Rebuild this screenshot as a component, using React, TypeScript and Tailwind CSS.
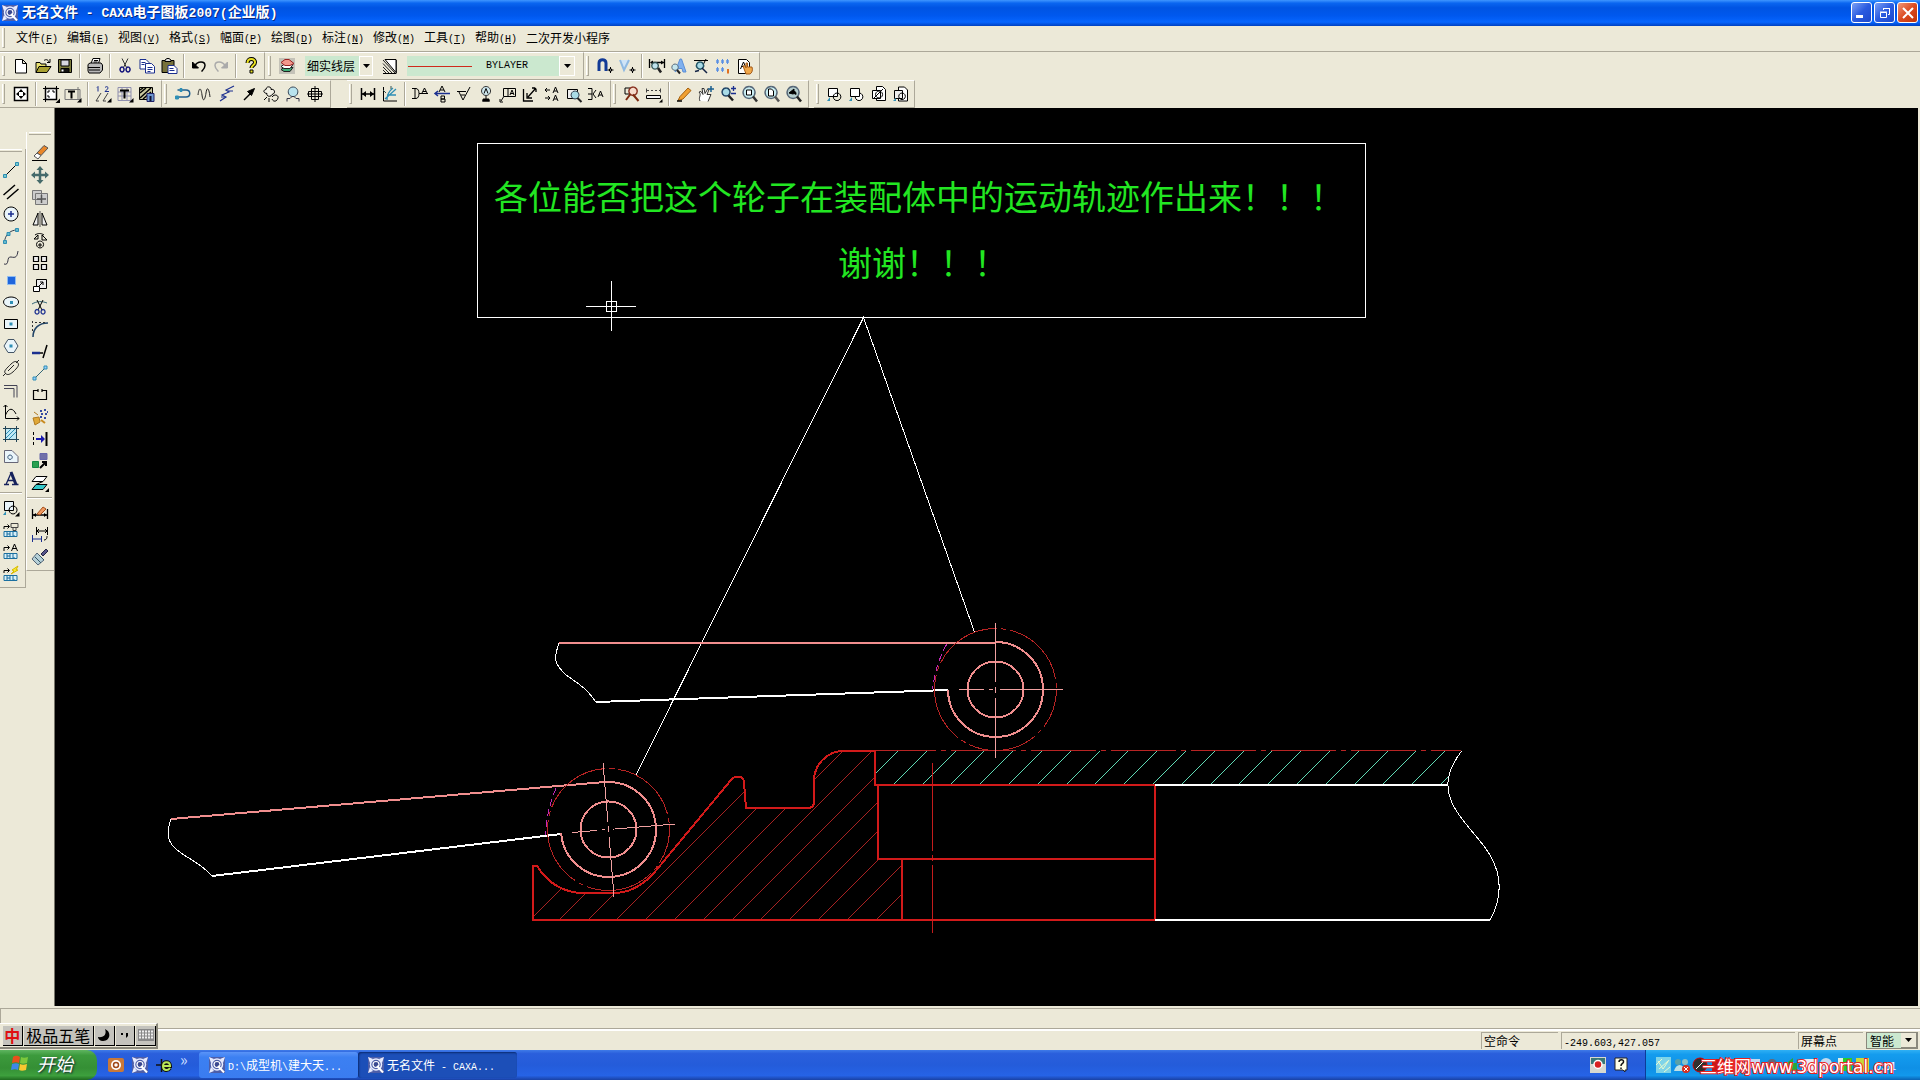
import React from "react";

type Part = [d: string, stroke?: string, fill?: string, width?: number];

const K = "#000";
const B = "#1b2f8f";
const C = "#2f8fb5";
const G = "#777";
const N = "none";

/* Every icon is drawn on an 18 x 18 grid. */
const ICONS: Record<string, Part[]> = {
  new: [["M4 2.500h6.500l4 4v9.500H3.500V2.500zM10.500 2.500v4h4", K, "#fff"]],
  open: [["M2 15.500V5.500h4l1 1.500h5v2.500", K, "#e8e070"], ["M2 15.500l3-6h12l-4 6z", K, "#a8a030"], ["M10 3.500c2-1.500 4-1 5 1.500M16 2v3.500h-3", K]],
  save: [["M2.500 2.500h13v13h-13z", K, "#7d7d3c"], ["M5 3h8v6H5z", K, "#d8d8e0"], ["M5 11.500h8v4H5z", K, "#111"], ["M6.500 12.500v2", "#fff", N, 2]],
  print: [["M5 6.500l2-5h7l-1.500 5", K, "#fff"], ["M2 7.500l2-1.500h11l1.500 2v5l-2.500 3H3l-1-2z", K, "#b9b9b9"], ["M2 10.500h12M3 13h11M8 3.500h4M7.500 5h4", K]],
  cut: [["M6 1.500l4.500 9M12 1.500l-4.500 9", "#333"], ["M6 10a2 2.500 0 1 0 .1 0M12 10a2 2.500 0 1 0 .1 0", "#10107a", N, 1.5]],
  copy: [["M2 2.500h6l3 3v6.500H2z", B, "#fff"], ["M7.500 6.500h6l3 3v6.500H7.500z", B, "#fff"], ["M3.500 5.500h4M3.500 7.500h3M9.500 10.500h5M9.500 12.500h5M9.500 14.500h3", B]],
  paste: [["M2 3.500h12v12H2z", K, "#77713a"], ["M5 4.500V3l2-1.500h2L11 3v1.500z", K, "#ddd"], ["M8 8.500h6l3 3v5H8z", B, "#fff"], ["M9.500 11.500h4M9.500 13.500h5", B]],
  undo: [["M2.500 5v6h6z", K, K], ["M4 9.500C8 3 15 4 15 8.500c0 3-2 4.500-3.500 6", K, N, 1.5]],
  redo: [["M15.500 5v6h-6z", "#aaa", "#aaa"], ["M14 9.500C10 3 3 4 3 8.500c0 3 2 4.500 3.500 6", "#aaa", N, 1.5]],
  help: [["M5.500 6c0-5.500 8-5 7.500-.5 0 2.500-3.500 3-3.500 5.500", K, N, 4], ["M5.500 6c0-5.500 8-5 7.500-.5 0 2.500-3.500 3-3.500 5.500", "#e8e020", N, 2], ["M8 13h3v3H8z", K, "#e8e020"]],
  layers: [["M1 1h16v16H1z", N, "#c4c2b8"], ["M3 12.500l3-2h9l-3 4H6z", "#222", "#3fae76"], ["M3 9.500l3-2h9l-3 4H6z", "#222", "#fff"], ["M3 5.500l4-3 4 0 5 4-4 2H7z", "#922", "#f2988c"]],
  linetype: [["M4 2.500h11v13z", K, "#fff"], ["M2 3l12 13M2 6.500l9 9.500M2 10l6 6M2 13l3 3M15.500 3v13.500", "#222"], ["M2 16.500h13", K]],
  magnet: [["M3 14V6c0-4.500 7-4.500 7 0v8", "#123a96", N, 3], ["M14.500 10v6M11.500 13h6", K], ["M13.500 12h2v2h-2z", K, "#fff"]],
  vsnap: [["M2 3l4 10 5-10", "#8fb9e2", "#cfe4f7", 2], ["M14.500 10v6M11.500 13h6", K], ["M13.500 12h2v2h-2z", K, "#fff"]],
  dimZoom: [["M1.500 2v9M16.500 2v9M3 5.500h13", K, N, 1.300], ["M2 5.500l3-2v4zM16 5.500l-3-2v4z", N, K], ["M7 5.500a3.300 3.300 0 1 0 .1 0", "#355", "#bfe2ec", 1.300], ["M10 11l3 4.500", "#222", N, 2.500]],
  textZoom: [["M5 15L10 2h1.500L16 15h-3l-1-3.500H9z", "#5b8fd8", "#7fb0ee"], ["M5 7a3.200 3.200 0 1 0 .1 0", "#567", "#c4e6ee"], ["M7 13l3 3.500", "#222", N, 2]],
  styleZoom: [["M2 3.500h14M14 2l-4 8", K], ["M8 5a3.600 3.600 0 1 0 .1 0", "#256", "#a9dbe6", 1.500], ["M10 11l5 5M3 14.500l4-1", "#124", N, 1.500]],
  points: [["M2 4.500h3M7 4.500h3M12 4.500h3M2 12.500h3M7 12.500h3", "#7fa8e4", N, 3], ["M3.500 2v5M8.500 2v5M13.500 2v5M3.500 10v5M8.500 10v5", "#5b8fe0"], ["M14 12v4.500", "#e07020", N, 2]],
  pageHand: [["M2.500 2.500h8l3 3v11h-11z", K, "#fff"], ["M4.500 12l3-7 3 7M5.500 9.500h4", K], ["M7 9c2-1 3 1 3 2V6h1.500v4h4.500c1 3 0 6-2 7h-4z", "#a45a18", "#f0a84a"]],

  frame: [["M2.500 2.500h13v13h-13z", K, "#fff", 1.500], ["M9 4l2.500 3h-5zM9 14l2.500-3h-5zM4 9l3-2.500v5zM14 9l-3-2.500v5z", N, K]],
  frame2: [["M3.500 3.500h11v11h-11z", K, "#fff", 1.500], ["M1 3.500h3M3.500 1v3M14 3.500h3M14.500 1v3M1 14.500h3M3.500 14v3", K], ["M6 8V6h2M10 6h2v2M6 10v2h2", K], ["M18 13.500v4.500h-4.500z", N, K]],
  titleT: [["M1 4.500h15v10H1zM14 2v12", G], ["M4 6.500h7M7.500 6.500v7", K, N, 2], ["M17.500 13v4.500H13z", N, K]],
  nums: [["M4 1.500v5M3 2.500l1-1M11 2.500c2-2 4 0 2.500 1.500L11 6.500h4", B], ["M2 16L7 8M9 16l5-8M2 16h3M9 16h3", "#444"], ["M17.500 13v4.500H13z", N, K]],
  gridT: [["M2 2.500h13v13H2zM6 2.500v13M2 7h13M2 11h13M11 2.500v13", "#8f8fae"], ["M4 5.500h9M8.500 5.500v8", K, N, 2], ["M17.500 13v4.500H13z", N, K]],
  disk: [["M1.500 2.500h13v12h-13z", K, "#c9c9a0"], ["M2 8l6-5M2 13l11-10M5 14l8-7M2 5l3-2", K, N, 1.500], ["M9 8.500h7v8H9z", "#226", "#6d98d0"], ["M12.500 11v5", "#113", N, 2]],

  pline: [["M3.500 5H12c5 0 5 7 0 7H3", "#1f5f8f", N, 1.500], ["M1.500 11h3v3h-3zM6 3.500h2v3H6z", C, C]],
  wave: [["M2 10c1-8 3-8 4 0s3 5 4-2 3-5 4 4", "#222"]],
  zig: [["M2 16l6-4-4-2 7-3-3-2 8-4", B, N, 1.200], ["M3 12h4M10 6h5", B]],
  arrow: [["M4 15l6-6", K, N, 1.500], ["M14.500 3.500l-7 3 4 4z", K, K]],
  gears: [["M4 4.500c0-4 6-3 5 0 4-1 5 4 1 5-1 3-6 2-5-1C1 8 1 5 4 4.500z", K, "#f2f0e4"], ["M10 12c3-4 7-1 6 1-1 4-5 4-6 1M2 15l3-3M7 13v4", K]],
  bulb: [["M9 2a4.800 4.800 0 1 0 .1 0", "#345", "#b9e3ee"], ["M3 16.500v-3h3l2-2h2l2 2h3v3", "#334"]],
  sect: [["M9 1v16M1 9h16", K], ["M5.500 3.500h7v11h-7zM2.500 6.500h13v5h-13z", K]],
  dim: [["M2.500 3v12M15.500 3v12M3 9h12", K, N, 1.500], ["M3 9l4-3v6zM15 9l-4-3v6z", N, K]],
  coord: [["M2.500 2v14H16", K], ["M4 14L15 4M6 15c0-6 2-9 6-12M6 10h9", C, N, 1.300], ["M2 5l3 3M10 1v3", "#355"]],
  dimA: [["M1 3.500h4c4 0 4 10 0 10H1M4 3v11M8 8.500h9", K], ["M11 8l2.500-5L16 8M12 6.500h3", K]],
  dimAB: [["M9 1l-3 6M9 1l3 6M7 5h4", K], ["M2 8.500h15M5 6L2 8.500 5 11", B, N, 1.500], ["M8 11v6h4v-3H8h3.500v-3z", K]],
  rough: [["M2 6.500h9M4 7l4 8 7-13M6 10h4", K]],
  datum: [["M9 1.500a4.500 4.500 0 1 0 .1 0", "#333", "#cfe8ee"], ["M7 8.500l2-5 2 5M9 11v4M5 16h8", K], ["M6 14h6v2H6z", K, K]],
  tol: [["M4.500 3.500h12v8h-12zM9 11V4M2 16l2.500-4M1 14v3h3", K], ["M11 10l2-5 2 5M11.500 8.500h3", K]],
  weld: [["M2.500 4v12H12M6 8v5h5M15 3L7 12M14 3h-3M15 4v3", K, N, 1.300]],
  aa: [["M2 5h5M2 5l2-2M2 5l2 2M2 13h5M7 13l-2-2M7 13l-2 2", K], ["M10 8l2.500-6L15 8M11 6h3M10 16l2.500-6 2.500 6M11 14h3", K]],
  boxZoom: [["M2.500 4.500h10v9h-10z", K, "#eee"], ["M10 6a4 4 0 1 0 .1 0", "#345", "#a9dbe6"], ["M12.500 13l4 4", "#222", N, 2]],
  exA: [["M1 3.500h4v11H1M1 9h4M9 5L6 9l3 4", K], ["M11 12l2.500-6 2.500 6M12 10h3", K]],
  findRed: [["M2 3h5v6H2z", K], ["M10 2a4.200 4.200 0 1 0 .1 0", "#832", "#f7dccc", 1.500], ["M7.500 9L3 15M10 9.500l5.500 6.500", "#7d2a10", N, 2]],
  ruler: [["M1.500 10.500h14v3h-14z", K, "#f2f2f2"], ["M2 5.500h2M6 5.500h2M10 5.500h2M14 5.500h1M1.500 3.500v4M15.500 3.500v4", "#444"], ["M17.500 14v3.500H14z", N, K]],
  pencil: [["M3 15.500l2-4 8-8.500 3 2.500-8 8.500z", "#a4600e", "#f0a030"], ["M2 16h5", K, N, 1.500]],
  pan: [["M3 16C1 12 5 10 2 7l2-.500 2 3-1-6 2 0 1 5 3-5 1 1-2 5 4 0-3 7", "#333", "#fff"], ["M14 1v6M11 4h6", "#1b5f8f", N, 1.500]],
  zoomPM: [["M7 3a4 4 0 1 0 .1 0", "#246", "#a9dbe6", 1.500], ["M9.500 10.500l4.500 5", "#222", N, 2.500], ["M12 3.500h5M14.500 1v5M12 8.500h5", B, N, 1.300]],
  zoomWin: [["M8 1.500a6 6 0 1 0 .1 0", "#567", "#c9edf2", 1.300], ["M5.500 5h5v5h-5z", K, "#fff"], ["M12 11.500l4 5", "#333", N, 2.500]],
  zoomPage: [["M8 1.500a6 6 0 1 0 .1 0", "#567", "#c9edf2", 1.300], ["M5.500 4h3l2 2v5h-5z", K, "#fff"], ["M12 11.500l4 5", "#555", N, 2.500]],
  zoomBack: [["M8 1.500a6 6 0 1 0 .1 0", "#567", "#b4cccc", 1.300], ["M4 8l5-4v2.500c2 0 2 1 2 3-1-1-2-1-3-.500z", K, K], ["M12 11.500l4 5", "#222", N, 2.500]],
  blk1: [["M2.500 3.500h9v8h-9z", K, "#fff"], ["M11 8a3.800 3.800 0 1 0 .1 0", K], ["M1 16l3-4v4z", N, C]],
  blk2: [["M11 8a3.800 3.800 0 1 0 .1 0", K, "#fff"], ["M2.500 3.500h9v8h-9z", K, "#fff"], ["M1 16l3-4v4z", N, C]],
  blk3: [["M6.500 1.500h6l3 3v11h-9z", K, "#fff"], ["M2.500 5.500h8v8h-8z", K, "#fff"], ["M9 6a3.500 3.500 0 1 0 .1 0M4 13l9-9", K]],
  blk4: [["M6.500 2h6l3 3v11h-9z", K, "#fff"], ["M2.500 5.500h8v8h-8z", K, "#eee"], ["M10 8a3.300 3.300 0 1 0 .1 0", K], ["M1 16l3-3v3z", N, C]],

  line: [["M3 15L15 3", K], ["M1.500 13.500h3v3h-3zM13.500 1.500h3v3h-3z", C, "#7cc"]],
  parallel: [["M1.500 12L13 2M5 16L16.500 6", K, N, 1.500]],
  circle: [["M9 2a7 7 0 1 0 .1 0z", K, "#eaf5fa"], ["M9 6v6M6 9h6", B, N, 1.500]],
  arc: [["M2.500 15C3 8 8 3 15 3", "#345"], ["M1.500 13.500h3v3h-3zM13.500 1.500h3v3h-3zM5 5.500h3v3H5z", C, "#6bc"]],
  spline: [["M2 15c6 2 2-8 7-7s6 0 7-6", "#334"]],
  point: [["M5.500 5.500h8v8h-8z", "#8fbcf0", "#1f66dd"]],
  ellipse: [["M9 4a7.500 5 0 1 0 .1 0z", K, "#eaf5fa"], ["M8 8h3v3H8z", N, C]],
  rect: [["M2.500 4.500h13v9h-13z", K, "#eaf5fa"], ["M7.500 7.500h3v3h-3z", N, C]],
  hex: [["M6 2.500h6l4 6.500-4 6.500H6L2 9z", "#456", "#eaf5fa"], ["M7.500 7.500h3v3h-3z", N, C]],
  slot: [["M3.500 14.500c-2-2 0-4 4-8s6-5 8-3 1 4-3 8-7 5-9 3zM6 12l6-6M1 17l3-3M14 4l3-3", "#222"]],
  corner: [["M2 4.500h13v12M2 7.500h10v9", "#445"]],
  axes: [["M3.500 2v13.500H17M1.500 4l2-2 2 2M15 13.500l2 2-2 2M3.500 12C7 4 11 5 14 11", K]],
  hatch: [["M3.500 3.500h11v11h-11z", B, "#bfe8f4"], ["M1 3.500h16M1 14.500h16M3.500 1v16M14.500 1v16", "#245"], ["M4 9l5-5M4 13l9-9M7 14l7-7", C]],
  region: [["M2.500 3.500H10l6 6v6H2.500z", "#667", "#eaf5fa"], ["M8 8a2.200 2.200 0 1 0 .1 0", "#357"]],
  letterA: [["M2 15.500h5M10 15.500h6.500M4 15.500L9.500 3M6 11.500h6", "#16225c", N, 1.300], ["M9 3l5 12.500", "#16225c", N, 3]],
  block: [["M2.500 2.500h9v9h-9z", K, "#eaf5fa"], ["M11 7a4 4 0 1 0 .1 0", K], ["M1 16l3-4v4z", N, C], ["M17.500 13v4.500H13z", N, K]],
  hgA: [["M2 8V5.500h5M5.500 3.500l2 2-2 2", K], ["M9 2.500h7v4H9zM11 6.500h3v3h-3z", "#444"], ["M2 10.500h13v5H2z", "#1a6fa0", "#d9f0f8"], ["M5 11v4M8 11v4M5 13h3M11 11v4h2", "#1a6fa0"]],
  hgB: [["M2 8V4.500h5M5.500 2.500l2 2-2 2", K], ["M9.500 8l3-7 3 7M10.500 5.500h4", K], ["M2 10.500h13v5H2z", "#1a6fa0", "#d9f0f8"], ["M5 11v4M8 11v4M5 13h3M11 11v4h2", "#1a6fa0"]],
  hgC: [["M2 8V5.500h5M5.500 3.500l2 2-2 2", K], ["M9 9l3-3-2-1 6-4-2 4 2 0z", "#d8b800", "#f8ee30"], ["M2 10.500h13v5H2z", "#1a6fa0", "#d9f0f8"], ["M5 11v4M8 11v4M5 13h3M11 11v4h2", "#1a6fa0"]],

  eraser: [["M6 9l7-7.500 4 2.500-7 7.500z", "#555", "#e8862a"], ["M3 12l3-3 4 2.500-3 3.500z", "#555", "#fff"], ["M1 16.500h15", K]],
  move: [["M9 2v14M2 9h14", "#456a6a", N, 2.500], ["M9 0l3.500 4h-7zM9 18l3.500-4h-7zM0 9l4-3.500v7zM18 9l-4-3.500v7z", N, "#456a6a"]],
  copyMove: [["M1.500 2.500h9v9h-9zM4.500 5.500h12v11h-12z", G, "#ccc"], ["M10.500 7v8M6 11h9", "#555", N, 1.500]],
  mirror: [["M9 1v16", "#555"], ["M7 3v12H2zM11 3v12h5z", K, "#eee"]],
  rotate: [["M3 7l4-4v4zM11 3l5 5h-5zM4 3c3-2 6-2 9 0", K], ["M9 9a3.500 3.500 0 1 0 .1 0M9 11v4M7 13h4", K]],
  array: [["M2.500 2.500h5v5h-5zM10.500 2.500h5v5h-5zM2.500 10.500h5v5h-5zM10.500 10.500h5v5h-5z", K, "#eee", 1.200]],
  scale: [["M5.500 3.500h10v9h-10z", K, "#eee"], ["M2.500 10.500h6v5h-6z", K, "#fff"], ["M8 10l4-4M9 6h3v3", K]],
  trim: [["M1 6c5-3 10-3 15-1", "#367"], ["M6 2l5 10M12 2L7 12", K], ["M6 11.500a2 2.300 0 1 0 .1 0M12 11.500a2 2.300 0 1 0 .1 0", B, N, 1.300]],
  fillet: [["M2 17C2 8 8 3 17 3", "#246", N, 1.500], ["M1.500 1v2M1.500 5v2M1.500 9v2M4 2.500h2M8 2.500h2M12 2.500h2", "#333", N, 1]],
  extend: [["M1 11h8", B, N, 2.500], ["M9 11h3M12 16l4-13", K, N, 1.500]],
  stretch: [["M3 15L15 3", "#367"], ["M2 13h3v3H2zM13 2h3v3h-3z", C, "#9cf"]],
  brk: [["M7 4.500H2.500v9h13v-9H11M7 3v3M11 3v3", K, N, 1.200]],
  explode: [["M9 3h2M13 2h2M16 4h1M10 6h2M14 6h2M9 9h2M13 10h2", "#334aa0", N, 2], ["M2 10l6-1 1 5-5 3zM3 4l4 3", "#b07a20", "#e0a838"], ["M10 12l4 3", "#c88a20", N, 2]],
  align: [["M2.500 2v3M2.500 7v3M2.500 12v3", K], ["M15.500 2v14", K, N, 2], ["M5 9h5", "#1a1ab0", N, 2], ["M14 9l-4-4v8z", N, "#1a1ab0"]],
  swap: [["M9 1.500h7v6H9z", "#66a", "#7070a8"], ["M1.500 9.500h6v6h-6z", "#184", "#2aa050"], ["M9 16l6-6M11 10h4v4", K, N, 2]],
  planes: [["M5 2.500h11l-4 5H1z", K, "#fff"], ["M5 10.500h11l-4 5H1z", K, "#35c8c8"], ["M12 7.500l-7 3", K], ["M18 14v4h-4z", N, K]],
  dimEdit: [["M1.500 5v10M16.500 5v10M2 11h14", K, N, 1.300], ["M2 11l3-2v4zM16 11l-3-2v4z", N, K], ["M6 10l6-7 3 2-6 6z", "#a5501c", "#f09a60"]],
  dimStyle: [["M5.500 1v8M16.500 1v8M6 5h10M8 3L6 5l2 2M14 3l2 2-2 2", K], ["M1.500 9v7M10.500 10v6M2 13h8", B], ["M13 14c3 0 3-3 3-4", K]],
  brush: [["M10 6l5-5 2 2-5 5z", "#224", "#558"], ["M6 5l7 7-6 5-6-6z", "#567", "#b5cfd6"], ["M4 9l6 6M8 7l5 5", "#356"]],
};

function Icon({ name }: { name: string }) {
  return (
    <svg viewBox="0 0 18 18" className="size-[18px]" aria-hidden="true">
      {ICONS[name].map(([d, s, f, w], i) => (
        <path key={i} d={d} stroke={s ?? K} fill={f ?? "none"} strokeWidth={w ?? 1} />
      ))}
    </svg>
  );
}

function Tools({ names }: { names: string }) {
  return (
    <>
      {names.split(" ").map((n, i) =>
        n === "|" ? (
          <span key={i} className="mx-[3px] h-6 w-[2px] shrink-0 border-l border-[#aca899] bg-white" />
        ) : (
          <button key={i} aria-label={n} className="flex h-[22px] w-[22px] shrink-0 items-center justify-center">
            <Icon name={n} />
          </button>
        ),
      )}
    </>
  );
}

function VTools({ names }: { names: string }) {
  return (
    <>
      {names.split(" ").map((n, i) =>
        n === "|" ? (
          <span key={i} className="my-[3px] h-[2px] w-full border-t border-[#aca899] bg-white" />
        ) : (
          <button key={i} aria-label={n} className="flex h-[22px] w-[22px] items-center justify-center">
            <Icon name={n} />
          </button>
        ),
      )}
    </>
  );
}

function Grip() {
  return <span className="ml-[2px] mr-[5px] h-5 w-[3px] shrink-0 border-b border-l border-r border-b-[#aca899] border-l-white border-r-[#aca899]" />;
}

function Group({ children, className = "" }: { children: React.ReactNode; className?: string }) {
  return (
    <div className={`flex h-7 shrink-0 items-center border-b border-r border-t border-b-[#aca899] border-r-[#aca899] border-t-white ${className}`}>
      <Grip />
      {children}
    </div>
  );
}

/* Splits a label so that Latin runs get a half-width face beside the CJK one. */
function Mix({ text, latin }: { text: string; latin: string }) {
  return (
    <>
      {text.split(/([\x20-\x7e]+)/).map((t, i) =>
        i % 2 ? (
          <span key={i} className={`whitespace-pre font-['Liberation_Mono',monospace] ${latin}`}>{t}</span>
        ) : (
          t
        ),
      )}
    </>
  );
}

function Logo() {
  return (
    <svg viewBox="0 0 16 16" className="size-4 shrink-0" aria-hidden="true">
      <path d="M0 0h16v16H0z" fill="#4d5ea8" />
      <path d="M0 0l5 2-3 4zM16 0l-5 2 3 4zM0 16l5-2-3-4z" fill="#e8ecff" />
      <circle cx="8" cy="7.500" r="5.500" fill="none" stroke="#e8ecff" strokeWidth="1.500" />
      <circle cx="8" cy="7.500" r="3" fill="#3a4890" stroke="#fff" strokeWidth="1.200" />
      <path d="M9 9l6 6.500" stroke="#fff" strokeWidth="2" />
    </svg>
  );
}

function Caret() {
  return (
    <svg viewBox="0 0 7 4" className="h-1 w-[7px]" aria-hidden="true">
      <path d="M0 0h7L3.500 4z" fill="#000" />
    </svg>
  );
}

const MENUS: [string, string][] = [
  ["文件", "F"], ["编辑", "E"], ["视图", "V"], ["格式", "S"], ["幅面", "P"],
  ["绘图", "D"], ["标注", "N"], ["修改", "M"], ["工具", "T"], ["帮助", "H"],
];

const redHatch = Array.from({ length: 20 }, (_, i) => Math.round(530 + i * 28.8));
const cyanHatch = Array.from({ length: 22 }, (_, i) => Math.round(898 + i * 28.8));
const basePath =
  "M533 920V866H537C546 880 561 893 584 893H614C636 893 651 878 663 862L731 780Q733 777 736 777H740Q743 777 744 782L746 808H807Q814 808 814 802V781C814 764 828 751 843 751H875V785H878V859H902V920Z";

function Wheel({ cx, cy, tilt }: { cx: number; cy: number; tilt: number }) {
  return (
    <g transform={`translate(${cx} ${cy}) rotate(${tilt})`}>
      <circle r="61" stroke="#b82424" strokeDasharray="70 4 5 4" strokeDashoffset="30" />
      <circle r="28" stroke="#f08e8e" strokeWidth="2" />
      <path d="M0 -47.500A47.500 47.500 0 1 1 -47.500 0" stroke="#f08e8e" strokeWidth="2" />
      <path d="M0 -67V-8M0 -3V3M0 8V68M-37 0H-12M-7 0H-3M4 0H67" stroke="#f0a0a0" />
      <path d="M-49 -45Q-60 -25 -63 0" stroke="#c028b8" strokeDasharray="7 4" />
    </g>
  );
}

function Drawing() {
  return (
    <svg viewBox="55 108 1863 898" preserveAspectRatio="xMinYMin meet" className="h-full w-full" fill="none" shapeRendering="crispEdges" role="img" aria-label="CAD">
      <defs>
        <clipPath id="base"><path d={basePath} /></clipPath>
        <clipPath id="plate"><path d="M875 751H1461C1451 765 1447 775 1448 785H875Z" /></clipPath>
      </defs>
      <g clipPath="url(#base)" stroke="#a82222" shapeRendering="auto">
        {redHatch.map((x) => <path key={x} d={`M${x} 920l180 -180`} />)}
      </g>
      <g clipPath="url(#plate)" stroke="#5fd8b4" shapeRendering="auto">
        {cyanHatch.map((x) => <path key={x} d={`M${x} 751l-34 34`} />)}
      </g>
      <path d="M875 750.500H1461" stroke="#b82424" strokeDasharray="65 5 5 5" strokeDashoffset="4" />
      <path d="M932.500 763V933" stroke="#c41c1c" strokeDasharray="88 4 6 4" />
      <g stroke="#d21a1a" strokeWidth="2">
        <path d={basePath} />
        <path d="M875 785H1155V920H902M878 859H1155" />
      </g>
      <g stroke="#fff">
        <path d="M477.500 143.500H1365.500V317.500H477.500Z" />
        <path d="M636 775L863.500 317.500L974.500 632" />
        <path d="M559 643C553 660 555 664 565 674C575 682 585 686 596 702M171 819C166 834 167 841 176 849C186 858 201 863 212 876" />
        <path d="M1461.500 751C1447 771 1444 786 1453 805C1462 823 1480 838 1490 855C1504 879 1501 900 1490 920" />
        <path d="M586 306.500H636M611.500 281V331M606.500 301.500H616.500V311.500H606.500Z" />
        <path strokeWidth="2" d="M596 702L948 690M212 876L561 834M1155 785H1448M1155 920H1490" />
      </g>
      <path d="M559 643H996M171 819L605 782" stroke="#f08e8e" strokeWidth="2" />
      <Wheel cx={995.5} cy={689.5} tilt={0} />
      <Wheel cx={608.5} cy={829.5} tilt={-4.7} />
      <g className="fill-[#22e622] font-['Noto_Sans_CJK_SC',sans-serif] text-[34px]">
        <text x="494" y="210">各位能否把这个轮子在装配体中的运动轨迹作出来！！！</text>
        <text x="838" y="276">谢谢！！！</text>
      </g>
    </svg>
  );
}

function TitleBar() {
  const box = "flex size-[21px] items-center justify-center rounded-[3px] border border-white";
  return (
    <header className="flex h-[26px] shrink-0 items-center bg-[linear-gradient(#3f96ff,#0a66f0_12%,#0054e3_30%,#0058ee_60%,#0665ff_85%,#0040c0)] pb-px pl-[2px] pr-[2px] text-white">
      <Logo />
      <h1 className="ml-1 flex-1 whitespace-pre text-[14px] font-bold leading-5 [text-shadow:1px_1px_#0a2a80]">
        <Mix text="无名文件 - CAXA电子图板2007(企业版)" latin="text-[13px]" />
      </h1>
      <div className="flex gap-[2px]">
        <button aria-label="最小化" className={`${box} bg-[linear-gradient(135deg,#7ba0f5,#2a5be0_50%,#1c48cc)]`}>
          <span className="mr-1 mt-2 h-[3px] w-[7px] bg-white" />
        </button>
        <button aria-label="还原" className={`${box} bg-[linear-gradient(135deg,#7ba0f5,#2a5be0_50%,#1c48cc)]`}>
          <svg viewBox="0 0 12 12" className="size-3" fill="none" stroke="#fff"><path d="M1.500 5.500h6v5h-6zM1 5h7M4.500 3V1.500h6v6H9M4 1.500h7" /></svg>
        </button>
        <button aria-label="关闭" className={`${box} bg-[linear-gradient(135deg,#f0987a,#dc4a20_50%,#c23408)]`}>
          <svg viewBox="0 0 12 12" className="size-3" stroke="#fff" strokeWidth="2"><path d="M1 1l10 10M11 1L1 11" /></svg>
        </button>
      </div>
    </header>
  );
}

function Toolbars() {
  return (
    <>
      <div className="flex h-7 shrink-0 items-center">
        <Group className="pr-[2px]">
          <Tools names="new open save | print | cut copy paste | undo redo | help" />
        </Group>
        <Group className="pl-px pr-2">
          <Tools names="layers" />
          <label className="relative ml-[7px] flex h-5 w-[68px] items-center bg-[#cbe8cf]">
            <select aria-label="图层" className="w-full appearance-none pl-[2px] text-[12px] leading-5 outline-none">
              <option>细实线层</option>
            </select>
            <span className="pointer-events-none absolute right-0 flex h-5 w-[14px] items-center justify-center border border-white bg-[#ece9d8]"><Caret /></span>
          </label>
          <span className="w-[6px]" />
          <Tools names="linetype" />
          <label className="relative ml-[6px] flex h-5 w-[168px] items-center bg-[#cbe8cf]">
            <span className="ml-px h-px w-16 bg-[#d02a1c]" />
            <select aria-label="线型" className="flex-1 appearance-none pl-[14px] font-['Liberation_Mono',monospace] text-[10px] leading-5 outline-none">
              <option>BYLAYER</option>
            </select>
            <span className="pointer-events-none absolute right-0 flex h-5 w-[16px] items-center justify-center border border-white bg-[#ece9d8]"><Caret /></span>
          </label>
        </Group>
        <Group className="pr-[3px]">
          <Tools names="magnet vsnap | dimZoom textZoom styleZoom points pageHand" />
        </Group>
      </div>
      <div className="flex h-7 shrink-0 items-center">
        <Group className="pr-[3px]">
          <Tools names="frame | frame2 titleT | nums gridT disk" />
        </Group>
        <Group className="pr-1">
          <Tools names="pline wave zig arrow gears bulb sect" />
        </Group>
        <span className="w-4" />
        <Group className="pr-[3px]">
          <Tools names="dim coord | dimA dimAB rough datum tol weld aa boxZoom exA" />
        </Group>
        <Group className="pr-[3px]">
          <Tools names="findRed ruler | pencil pan zoomPM zoomWin zoomPage zoomBack" />
        </Group>
        <span className="w-[5px]" />
        <Group className="pr-[2px]">
          <Tools names="blk1 blk2 blk3 blk4" />
        </Group>
      </div>
    </>
  );
}

function ImeBar() {
  const cell = "flex h-5 items-center justify-center border-b border-r border-black bg-[#c4c3bd]";
  return (
    <div className="absolute left-0 top-[17px] flex h-[26px] w-[158px] items-center gap-px border-b-2 border-r-2 border-t border-[#8a887c] border-t-white bg-[#ece9d8] pl-[3px]">
      <button className={`${cell} w-5 text-[16px] font-bold text-[#e01010]`}>中</button>
      <button className={`${cell} w-[71px] text-[16px] leading-5`}>极品五笔</button>
      <button aria-label="半角" className={`${cell} w-5`}>
        <svg viewBox="0 0 14 14" className="size-[14px]"><path d="M8 1c7 3 5 12-2 12-3 0-5-2-5-4 6 1 9-3 7-8z" fill="#000" /></svg>
      </button>
      <button aria-label="标点" className={`${cell} w-5`}>
        <svg viewBox="0 0 14 14" className="size-[14px]"><path d="M3 5h2v2H3zM8 5h2v3l-2 2z" fill="#000" /></svg>
      </button>
      <button aria-label="软键盘" className={`${cell} w-5`}>
        <svg viewBox="0 0 16 12" className="h-3 w-4"><path d="M0 0h16v12H0z" fill="#888" /><path d="M1 2.500h14M1 5.500h14M1 8.500h14" stroke="#eee" strokeWidth="2" strokeDasharray="2 1" /></svg>
      </button>
    </div>
  );
}

function StatusBar() {
  const f = "h-[17px] border-l border-t border-[#aca899] pl-[2px] text-[12px] leading-4";
  return (
    <div className="relative shrink-0">
      <div className="mt-[2px] h-[21px] border-b border-l border-t border-[#aca899]" />
      <div className="flex h-[21px] items-end justify-end gap-[3px] border-t-2 border-white pb-px pr-[2px]">
        <span className={`${f} w-[77px]`}>空命令</span>
        <span className={`${f} w-[234px]`}><Mix text="-249.603,427.057" latin="text-[10px]" /></span>
        <span className={`${f} w-[65px]`}>屏幕点</span>
        <label className="relative flex h-[17px] w-[52px] border border-[#8a887c] bg-[#cbe8cf]">
          <select aria-label="捕捉方式" className="w-full appearance-none pl-[3px] text-[12px] leading-4 outline-none"><option>智能</option></select>
          <span className="pointer-events-none absolute bottom-0 right-0 top-0 flex w-4 items-center justify-center border-b border-r border-[#8a887c] bg-[#ece9d8]"><Caret /></span>
        </label>
      </div>
      <ImeBar />
    </div>
  );
}

function TrayIcons() {
  return (
    <svg viewBox="0 0 215 16" className="h-4 w-[215px]" aria-hidden="true">
      <path d="M0 0h15v16H0z" fill="#7fd4e8" /><path d="M2 4l5 8 6-9M3 12l9-8M0 8l6-6M8 15l6-5" stroke="#e9fbd0" fill="none" />
      <circle cx="22" cy="5" r="3" fill="#5aa0a8" /><circle cx="29" cy="5" r="3" fill="#88c2c8" /><path d="M18 14c2-8 9-8 12 0z" fill="#bfe0e4" /><circle cx="30" cy="12" r="4" fill="#d83020" /><path d="M28 10l4 4M32 10l-4 4" stroke="#fff" />
      <circle cx="44" cy="8" r="7" fill="#303030" stroke="#c00" /><path d="M40 12l8-8" stroke="#fff" /><path d="M56 2h12v12H56z" fill="#c81818" /><path d="M74 2h12v12H74z" fill="#e03838" />
      <path d="M92 2h12v9H92z" fill="#c8d8f0" /><circle cx="116" cy="7" r="5" fill="#667" /><path d="M128 8l9-7v5h4v8h-8z" fill="#28a838" />
      <path d="M146 2h14v12h-14z" fill="#e8eef8" /><circle cx="170" cy="7" r="6" fill="#c4dcf0" /><path d="M182 1h5v12h-5z" fill="#dff0e8" /><path d="M187 1h9v13h-9z" fill="#20d030" /><path d="M200 1h13v14h-13z" fill="#c8d838" />
    </svg>
  );
}

function Taskbar() {
  const task = "flex h-[26px] w-[159px] items-center gap-[3px] rounded-[3px] pl-[10px] text-[12px] text-white";
  return (
    <footer className="flex h-[30px] shrink-0 items-center bg-[linear-gradient(#3f7be8,#2a5fdc_12%,#245cda_50%,#2663e6_85%,#1941a5)]">
      <button className="flex h-full w-[97px] items-center gap-2 rounded-r-[10px] bg-[linear-gradient(#5fb560,#3c9a3c_18%,#358f35_60%,#3da03d_85%,#1f6a1f)] pb-1 pl-[11px] text-[18px] italic text-white [text-shadow:1px_1px_2px_#123]">
        <svg viewBox="0 0 18 18" className="size-[18px]" aria-hidden="true">
          <path d="M2 3c3-2 5-1 7 0L8 9C6 8 4 8 1 9z" fill="#e8501c" /><path d="M10 3c2 1 4 1 7 0l-1 6c-3 1-5 1-7 0z" fill="#7cc83c" />
          <path d="M1 10c3-1 5-1 7 0l-1 6c-2-1-4-1-7 0z" fill="#3c88e8" /><path d="M9 10c2 1 4 1 7 0l-1 6c-3 1-5 1-7 0z" fill="#f8c830" />
        </svg>
        开始
      </button>
      <div className="flex flex-1 items-center">
        <div className="flex w-[102px] items-center gap-2 pl-[11px]">
          <button aria-label="ACDSee">
            <svg viewBox="0 0 16 16" className="size-4"><rect y="1" width="16" height="14" rx="2" fill="#c87838" /><circle cx="8" cy="8" r="5" fill="#fff" /><circle cx="8" cy="8" r="2.500" fill="#fff" stroke="#a04818" strokeWidth="1.500" /></svg>
          </button>
          <button aria-label="CAXA"><Logo /></button>
          <button aria-label="IE">
            <svg viewBox="0 0 16 16" className="size-4" fill="none"><path d="M0 8h5M5.500 2v13" stroke="#111" strokeWidth="1.500" /><path d="M8 9h6c0-5-7-5-7 0s5 5 7 2" stroke="#111" strokeWidth="4" /><path d="M8 9h6c0-5-7-5-7 0s5 5 7 2" stroke="#b8e858" strokeWidth="2" /></svg>
          </button>
          <span className="-mt-3 text-[16px] leading-4 text-[#c8dcff]">»</span>
        </div>
        <button className={`${task} bg-[linear-gradient(#5a94f8,#3c80f2_20%,#3a7cf0)]`}>
          <Logo /><span className="whitespace-pre"><Mix text="D:\成型机\建大天..." latin="text-[10px]" /></span>
        </button>
        <button className={`${task} bg-[#1c4fb8] shadow-[inset_1px_1px_2px_#0a2a70]`}>
          <Logo /><span className="whitespace-pre"><Mix text="无名文件 - CAXA..." latin="text-[10px]" /></span>
        </button>
      </div>
      <div className="mr-[17px] flex items-center gap-2">
        <svg viewBox="0 0 16 16" className="size-4" aria-hidden="true"><path d="M0 0h16v16H0z" fill="#d8d8d0" /><path d="M1 1h14v6H1z" fill="#3a7878" /><circle cx="8" cy="7.500" r="4" fill="#d82020" stroke="#fff" strokeWidth="1.500" /></svg>
        <svg viewBox="0 0 14 16" className="h-4 w-[14px]" aria-hidden="true"><path d="M1 1h12v12h-2v2l-2-2H1z" fill="#ffffe8" stroke="#222" /><path d="M5 5c0-3 5-3 4.500 0C9 7 7 6.500 7 9M7 10.500v1.500" stroke="#111" strokeWidth="1.500" fill="none" /></svg>
      </div>
      <div className="relative flex h-full w-[275px] items-center border-l border-[#0c3c98] bg-[linear-gradient(#2fb0f4,#149cee_15%,#0f90e6_60%,#1298ec_85%,#0a62b4)] pl-[10px]">
        <TrayIcons />
        <span className="ml-1 text-[11px] text-white">0:51</span>
        <span className="absolute left-[54px] top-1 whitespace-nowrap text-[17px] leading-6 text-white [-webkit-text-stroke:2px_#e82020] [paint-order:stroke_fill]">
          三维网<span className="font-['DejaVu_Sans',sans-serif]">www.3dportal.cn</span>
        </span>
      </div>
    </footer>
  );
}

export default function App() {
  return (
    <div className="flex h-screen w-full flex-col overflow-hidden bg-[#ece9d8] font-['Noto_Sans_CJK_SC',sans-serif] text-black">
      <TitleBar />
      <nav className="mt-px flex h-[25px] shrink-0 items-center border-b border-[#aca899] pb-[2px] text-[12px] leading-5">
        <Grip />
        <div className="flex pl-[6px]">
          {MENUS.map(([label, key]) => (
            <button key={key} className="w-[51px] whitespace-nowrap text-left">
              {label}
              <span className="font-['Liberation_Mono',monospace] text-[10px]">(<u>{key}</u>)</span>
            </button>
          ))}
          <button className="whitespace-nowrap">二次开发小程序</button>
        </div>
      </nav>
      <Toolbars />
      <main className="flex min-h-0 flex-1">
        <aside className="flex w-[26px] shrink-0 flex-col pt-[41px]">
          <div className="flex flex-col items-center border-b border-r border-[#aca899] pb-[2px] pr-[3px]">
            <span className="mb-[7px] h-[3px] w-[22px] border-b border-t border-b-[#aca899] border-t-white" />
            <VTools names="line parallel circle arc spline point ellipse rect hex slot corner axes hatch region letterA | block hgA hgB hgC" />
          </div>
        </aside>
        <aside className="flex w-[29px] shrink-0 flex-col border-r border-[#77756a] pt-6">
          <div className="flex flex-col items-center border-b border-l border-b-[#aca899] border-l-white pb-[2px] pr-[2px]">
            <span className="mb-[7px] h-[3px] w-[22px] border-b border-t border-b-[#aca899] border-t-white" />
            <VTools names="eraser move copyMove mirror rotate array scale trim fillet extend stretch brk explode align swap planes | dimEdit dimStyle brush" />
          </div>
        </aside>
        <div className="mr-[2px] min-w-0 flex-1 bg-black">
          <Drawing />
        </div>
      </main>
      <StatusBar />
      <Taskbar />
    </div>
  );
}
